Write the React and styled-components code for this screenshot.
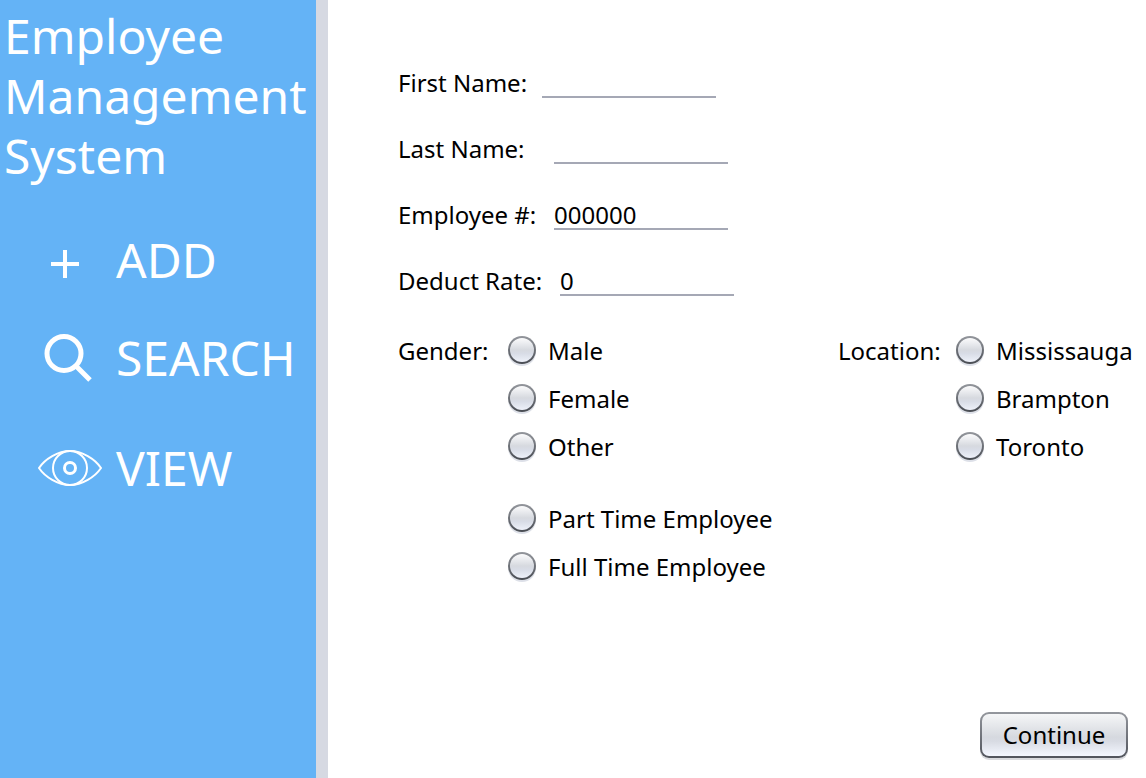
import React from "react";
import styled, { createGlobalStyle } from "styled-components";

const GlobalStyle = createGlobalStyle`
  *, *::before, *::after { box-sizing: border-box; }
  body {
    margin: 0;
    background: #ffffff;
    color: #000000;
    font-family: "Noto Sans", "Open Sans", sans-serif;
    font-size: 24px;
  }
`;

const Page = styled.div`
  display: flex;
  min-height: 100vh;
`;

const Sidebar = styled.aside`
  flex: 0 0 328px;
  padding-top: 6px;
  background: #64b3f6;
  border-right: 12px solid #d6d9e2;
  color: #ffffff;
`;

const Title = styled.h1`
  margin: 0;
  padding-left: 4px;
  font-size: 48px;
  font-weight: 400;
  line-height: 60px;
`;

const Nav = styled.nav`
  display: flex;
  flex-direction: column;
`;

const NavButton = styled.button`
  display: flex;
  align-items: center;
  gap: 12px;
  margin: ${({ $space }) => $space}px 0 0;
  padding: 0 0 0 36px;
  border: 0;
  background: none;
  color: inherit;
  font-family: "Noto Sans", "Open Sans", sans-serif;
  font-size: 48px;
  line-height: 60px;
  text-align: left;
  cursor: pointer;
`;

const NavIcon = styled.svg`
  flex: none;
  width: 68px;
  height: 48px;
  fill: none;
  stroke: currentColor;
`;

const Form = styled.form`
  flex: 1;
  display: flex;
  flex-direction: column;
  padding: 68px 0 20px 70px;
`;

const Fields = styled.div`
  display: flex;
  flex-direction: column;
  gap: 36px;
`;

const FieldRow = styled.div`
  display: flex;
  align-items: flex-start;
  line-height: 30px;
`;

const FieldLabel = styled.label`
  width: ${({ $width }) => $width}px;
  white-space: nowrap;
`;

const TextInput = styled.input`
  width: 174px;
  height: 30px;
  padding: 0;
  border: 0;
  border-bottom: 2px solid #a5a8b5;
  border-radius: 0;
  outline: 0;
  background: transparent;
  color: inherit;
  font: inherit;
  line-height: 28px;
`;

const Choices = styled.div`
  display: flex;
  margin-top: ${({ $space }) => $space}px;
  line-height: 50px;
`;

const Group = styled.div`
  display: flex;
  min-width: ${({ $width }) => $width || 0}px;
`;

const GroupLabel = styled.span`
  width: ${({ $width }) => $width}px;
`;

const Options = styled.div`
  display: flex;
  flex-direction: column;
`;

const Option = styled.label`
  display: flex;
  gap: 12px;
  height: 48px;
  white-space: nowrap;
`;

const Radio = styled.input`
  appearance: none;
  flex: none;
  width: 28px;
  height: 28px;
  margin: 10px 0;
  border: 2px solid transparent;
  border-radius: 50%;
  background:
    linear-gradient(#fbfbfc, #d6d9df 50%, #d8dce6 65%, #eef1fa) padding-box,
    linear-gradient(#94979d, #484c53) border-box;
  box-shadow: 0 2px 0 #dde0e8;

  &:checked {
    background:
      radial-gradient(circle, #22272f 5px, transparent 6px) padding-box,
      linear-gradient(#fbfbfc, #d6d9df 50%, #eef1fa) padding-box,
      linear-gradient(#94979d, #484c53) border-box;
  }
`;

const ContinueButton = styled.button`
  align-self: flex-end;
  width: 148px;
  height: 46px;
  margin: auto 18px 0 0;
  padding: 0;
  border: 2px solid transparent;
  border-radius: 9px;
  background:
    linear-gradient(#f5f6f7, #d6d9df 55%, #d8dbe3 65%, #f4f7ff) padding-box,
    linear-gradient(#94979d, #51545c) border-box;
  box-shadow: 0 2px 0 #d9dade;
  color: inherit;
  font: inherit;
  line-height: 42px;
  cursor: pointer;
`;

const fields = [
  { id: "first-name", label: "First Name:", width: 144, value: "" },
  { id: "last-name", label: "Last Name:", width: 156, value: "" },
  { id: "employee-number", label: "Employee #:", width: 156, value: "000000" },
  { id: "deduct-rate", label: "Deduct Rate:", width: 162, value: "0" },
];

const PlusIcon = () => (
  <NavIcon viewBox="0 0 68 48" strokeWidth="4" aria-hidden="true">
    <path d="M15 28h28M29 14v28" />
  </NavIcon>
);

const SearchIcon = () => (
  <NavIcon viewBox="0 1 68 48" strokeWidth="5" aria-hidden="true">
    <circle cx="28" cy="20.5" r="17" />
    <path d="M39 32L54 47" />
  </NavIcon>
);

const EyeIcon = () => (
  <NavIcon viewBox="0 1 68 48" strokeWidth="2" aria-hidden="true">
    <path d="M3 25C9 16 22 8 34 8s25 8 31 17c-6 9-19 17-31 17S9 34 3 25z" />
    <circle cx="34" cy="25" r="17" />
    <circle cx="34" cy="25" r="5.5" strokeWidth="3" />
  </NavIcon>
);

function RadioOptions({ name, items }) {
  return (
    <Options>
      {items.map((item) => (
        <Option key={item}>
          <Radio type="radio" name={name} value={item} />
          {item}
        </Option>
      ))}
    </Options>
  );
}

export default function App() {
  return (
    <>
      <GlobalStyle />
      <Page>
        <Sidebar>
          <Title>Employee Management System</Title>
          <Nav>
            <NavButton type="button" $space={44}><PlusIcon />ADD</NavButton>
            <NavButton type="button" $space={38}><SearchIcon />SEARCH</NavButton>
            <NavButton type="button" $space={50}><EyeIcon />VIEW</NavButton>
          </Nav>
        </Sidebar>
        <Form onSubmit={(event) => event.preventDefault()}>
          <Fields>
            {fields.map(({ id, label, width, value }) => (
              <FieldRow key={id}>
                <FieldLabel htmlFor={id} $width={width}>{label}</FieldLabel>
                <TextInput id={id} type="text" defaultValue={value} />
              </FieldRow>
            ))}
          </Fields>
          <Choices $space={30}>
            <Group role="radiogroup" aria-labelledby="gender-label" $width={440}>
              <GroupLabel id="gender-label" $width={110}>Gender:</GroupLabel>
              <RadioOptions name="gender" items={["Male", "Female", "Other"]} />
            </Group>
            <Group role="radiogroup" aria-labelledby="location-label">
              <GroupLabel id="location-label" $width={118}>Location:</GroupLabel>
              <RadioOptions name="location" items={["Mississauga", "Brampton", "Toronto"]} />
            </Group>
          </Choices>
          <Choices $space={24}>
            <Group role="radiogroup" aria-label="Employment type">
              <GroupLabel $width={110} />
              <RadioOptions name="employment" items={["Part Time Employee", "Full Time Employee"]} />
            </Group>
          </Choices>
          <ContinueButton type="submit">Continue</ContinueButton>
        </Form>
      </Page>
    </>
  );
}
